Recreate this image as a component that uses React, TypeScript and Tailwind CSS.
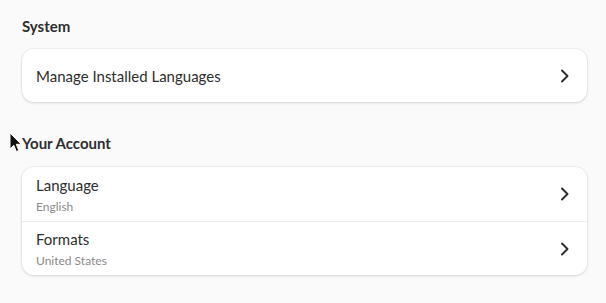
interface Row {
    title: string;
    subtitle?: string;
}

const Chevron = () => (
    <svg width="10" height="14" viewBox="0 0 10 14" fill="none">
        <path d="M2 1.5 L7.5 7 L2 12.5" stroke="#2e2e2e" strokeWidth="2" strokeLinecap="round" strokeLinejoin="round" />
    </svg>
);

const Card = ({ rows }: { rows: Row[] }) => (
    <div className="ml-[22px] mr-[19px] rounded-xl bg-white shadow-[0_0_0_1px_rgba(0,0,0,0.04),0_1px_3px_rgba(0,0,0,0.12)]">
        {rows.map((row, i) => (
            <div
                key={row.title}
                className={`flex items-center pl-[14px] pr-[17px] ${row.subtitle ? 'h-[54px]' : 'h-[53px]'} ${i > 0 ? 'border-t border-[#ebebeb]' : ''}`}
            >
                <div className="flex flex-1 flex-col">
                    <span className="text-[15px] leading-[20px] text-[#2e2e2e]">{row.title}</span>
                    {row.subtitle && (
                        <span className="mt-[4px] text-[12px] leading-[15px] text-[#8a8a8a]">{row.subtitle}</span>
                    )}
                </div>
                <Chevron />
            </div>
        ))}
    </div>
);

export default function App() {
    return (
        <div className="relative h-[303px] w-[606px] bg-[#fafafa] font-['Lato','Noto_Sans',sans-serif]">
            <div className="pt-[16px]">
                <h2 className="mb-[13px] ml-[22px] text-[15px] font-bold leading-[20px] text-[#2e2e2e]">System</h2>
                <Card rows={[{ title: 'Manage Installed Languages' }]} />
                <h2 className="mb-[14px] ml-[22px] mt-[31px] text-[15px] font-bold leading-[20px] text-[#2e2e2e]">Your Account</h2>
                <Card
                    rows={[
                        { title: 'Language', subtitle: 'English' },
                        { title: 'Formats', subtitle: 'United States' },
                    ]}
                />
            </div>
            {/* mouse pointer */}
            <svg className="absolute left-[9px] top-[132px]" width="13" height="21" viewBox="0 0 13 21">
                <path d="M1 1 L1 17 L4.8 13.3 L7.3 19.5 L9.8 18.5 L7.3 12.3 L12.2 12.3 Z" fill="#111" stroke="#fff" strokeWidth="1" />
            </svg>
        </div>
    );
}
